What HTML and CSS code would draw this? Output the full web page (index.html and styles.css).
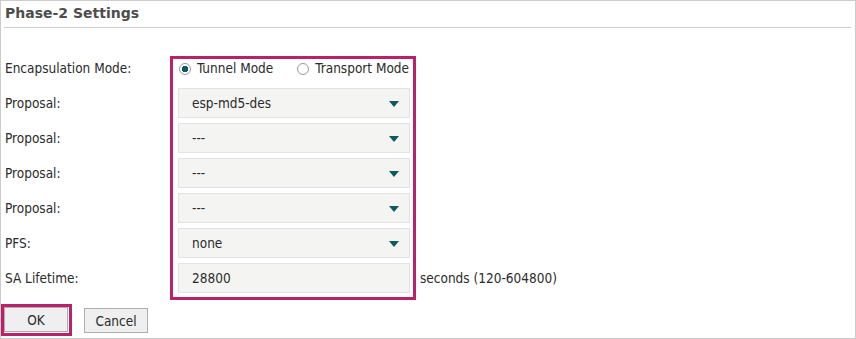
FILE: index.html
```html
<!DOCTYPE html>
<html lang="en">

<head>
  <meta charset="UTF-8">
  <title>Phase-2 Settings</title>
  <link rel="stylesheet" href="styles.css">
</head>

<body>

  <div class="panel">
    <h2 class="panel-title">Phase-2 Settings</h2>

    <div class="form">
      <div class="col labels">
        <div class="row row-first">Encapsulation Mode:</div>
        <div class="row">Proposal:</div>
        <div class="row">Proposal:</div>
        <div class="row">Proposal:</div>
        <div class="row">Proposal:</div>
        <div class="row">PFS:</div>
        <div class="row">SA Lifetime:</div>
      </div>

      <div class="col controls">
        <div class="row row-first radios">
          <label class="radio"><input type="radio" name="mode" checked> Tunnel Mode</label>
          <label class="radio"><input type="radio" name="mode"> Transport Mode</label>
        </div>
        <div class="row"><div class="select"><span>esp-md5-des</span></div></div>
        <div class="row"><div class="select"><span>---</span></div></div>
        <div class="row"><div class="select"><span>---</span></div></div>
        <div class="row"><div class="select"><span>---</span></div></div>
        <div class="row"><div class="select"><span>none</span></div></div>
        <div class="row"><input class="text-input" type="text" value="28800"></div>
      </div>

      <div class="col suffix">
        <div class="row row-first"></div>
        <div class="row"></div>
        <div class="row"></div>
        <div class="row"></div>
        <div class="row"></div>
        <div class="row"></div>
        <div class="row">seconds (120-604800)</div>
      </div>
    </div>

    <div class="buttons">
      <span class="highlight"><button>OK</button></span>
      <button>Cancel</button>
    </div>
  </div>

</body>

</html>
```

FILE: styles.css
```css
body {
  margin: 0;
  font-family: "DejaVu Sans Condensed", "DejaVu Sans", sans-serif;
  font-size: 13.5px;
  color: #2b2b2b;
  background-color: #fff;
}

.panel {
  width: 854px;
  height: 337px;
  border: 1px solid #ccc;
}

.panel-title {
  margin: 0 4px 0 3px;
  height: 26px;
  line-height: 25px;
  font-family: "DejaVu Sans", sans-serif;
  font-size: 14px;
  font-weight: bold;
  color: #4d4d4d;
  border-bottom: 1px solid #ccc;
  padding-left: 1px;
}

.form {
  display: flex;
  margin-top: 28px;
}

.col {
  display: flex;
  flex-direction: column;
  padding-top: 3px;
}

.row {
  height: 30px;
  line-height: 30px;
  margin-bottom: 5px;
  white-space: nowrap;
}

.row-first {
  height: 19px;
  line-height: 19px;
  margin-bottom: 10px;
}

.labels {
  width: 165px;
  padding-left: 4px;
}

.controls {
  width: 246px;
  box-sizing: border-box;
  border: 3px solid #b9226a;
  padding: 0 3px 4px 5px;
}

.controls .row:last-child {
  margin-bottom: 0;
}

.suffix {
  padding-left: 4px;
}

.radios {
  display: flex;
  gap: 24px;
  padding-left: 1px;
}

.radio {
  display: flex;
  align-items: center;
  gap: 6px;
}

.radio input {
  appearance: none;
  margin: 0;
  width: 12px;
  height: 12px;
  border: 1px solid #9a9a9a;
  border-radius: 50%;
  background-color: #fff;
  box-sizing: border-box;
}

.radio input:checked {
  background: radial-gradient(circle, #0c5a60 0, #0c5a60 3px, #fff 3.5px);
}

.select {
  position: relative;
  height: 30px;
  box-sizing: border-box;
  border: 1px solid #e3e3e3;
  background-color: #f4f4f2;
  padding-left: 13px;
  line-height: 28px;
}

.select::after {
  content: "";
  position: absolute;
  right: 10px;
  top: 12px;
  border-left: 5px solid transparent;
  border-right: 5px solid transparent;
  border-top: 6px solid #0c5a60;
}

.text-input {
  display: block;
  width: 100%;
  height: 30px;
  box-sizing: border-box;
  margin: 0;
  border: 1px solid #e3e3e3;
  background-color: #f4f4f2;
  padding: 0 0 0 13px;
  font: inherit;
  color: #2b2b2b;
}

.buttons {
  display: flex;
  align-items: flex-start;
  gap: 12px;
  margin-top: 4px;
}

.highlight {
  display: block;
  border: 3px solid #b9226a;
  padding: 0 1px 1px 0;
}

button {
  width: 64px;
  height: 25px;
  margin: 0;
  border: 1px solid #adadad;
  background-color: #efefef;
  font: inherit;
  color: #2b2b2b;
}

.buttons > button {
  margin-top: 4px;
}
```
